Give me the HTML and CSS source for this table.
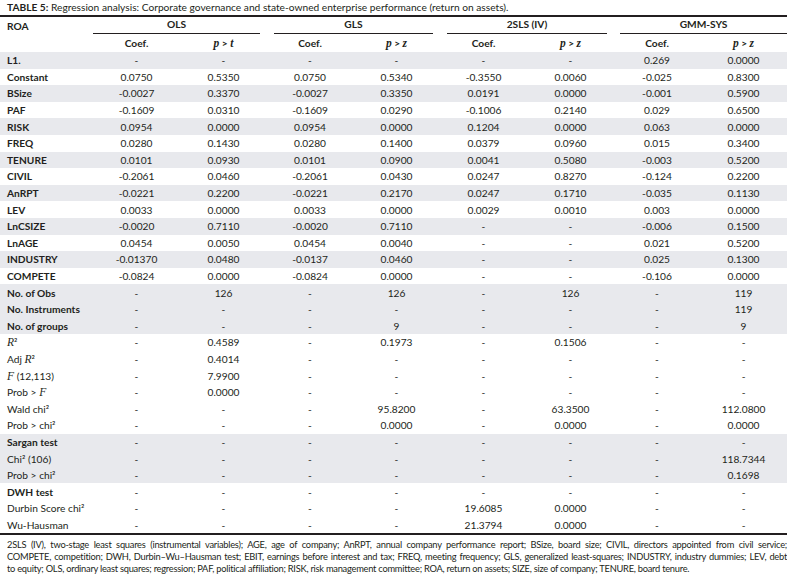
FILE: index.html
```html
<!DOCTYPE html>
<html lang="en">
<head>
<meta charset="utf-8">
<title>Table 5</title>
<link rel="stylesheet" href="styles.css">
</head>
<body>
<div class="caption"><b>TABLE 5:</b> Regression analysis: Corporate governance and state-owned enterprise performance (return on assets).</div>
<table class="reg">
<colgroup>
<col class="c-label"><col class="c87"><col class="c87"><col class="c86"><col class="c87"><col class="c87"><col class="c87"><col class="c86"><col class="c87">
</colgroup>
<thead>
<tr class="h1">
<th class="lab">ROA</th>
<th colspan="2"><span class="rule r-first">OLS</span></th>
<th colspan="2"><span class="rule r-mid">GLS</span></th>
<th colspan="2"><span class="rule r-mid">2SLS (IV)</span></th>
<th colspan="2"><span class="rule r-last">GMM-SYS</span></th>
</tr>
<tr class="h2">
<th></th>
<th>Coef.</th><th><i class="m">p</i> &gt; <i class="m">t</i></th>
<th>Coef.</th><th><i class="m">p</i> &gt; <i class="m">z</i></th>
<th>Coef.</th><th><i class="m">p</i> &gt; <i class="m">z</i></th>
<th>Coef.</th><th><i class="m">p</i> &gt; <i class="m">z</i></th>
</tr>
</thead>
<tbody>
<tr class="sh"><td class="lab b">L1.</td><td>-</td><td>-</td><td>-</td><td>-</td><td>-</td><td>-</td><td>0.269</td><td>0.0000</td></tr>
<tr><td class="lab b">Constant</td><td>0.0750</td><td>0.5350</td><td>0.0750</td><td>0.5340</td><td>-0.3550</td><td>0.0060</td><td>-0.025</td><td>0.8300</td></tr>
<tr class="sh"><td class="lab b">BSize</td><td>-0.0027</td><td>0.3370</td><td>-0.0027</td><td>0.3350</td><td>0.0191</td><td>0.0000</td><td>-0.001</td><td>0.5900</td></tr>
<tr><td class="lab b">PAF</td><td>-0.1609</td><td>0.0310</td><td>-0.1609</td><td>0.0290</td><td>-0.1006</td><td>0.2140</td><td>0.029</td><td>0.6500</td></tr>
<tr class="sh"><td class="lab b">RISK</td><td>0.0954</td><td>0.0000</td><td>0.0954</td><td>0.0000</td><td>0.1204</td><td>0.0000</td><td>0.063</td><td>0.0000</td></tr>
<tr><td class="lab b">FREQ</td><td>0.0280</td><td>0.1430</td><td>0.0280</td><td>0.1400</td><td>0.0379</td><td>0.0960</td><td>0.015</td><td>0.3400</td></tr>
<tr class="sh"><td class="lab b">TENURE</td><td>0.0101</td><td>0.0930</td><td>0.0101</td><td>0.0900</td><td>0.0041</td><td>0.5080</td><td>-0.003</td><td>0.5200</td></tr>
<tr><td class="lab b">CIVIL</td><td>-0.2061</td><td>0.0460</td><td>-0.2061</td><td>0.0430</td><td>0.0247</td><td>0.8270</td><td>-0.124</td><td>0.2200</td></tr>
<tr class="sh"><td class="lab b">AnRPT</td><td>-0.0221</td><td>0.2200</td><td>-0.0221</td><td>0.2170</td><td>0.0247</td><td>0.1710</td><td>-0.035</td><td>0.1130</td></tr>
<tr><td class="lab b">LEV</td><td>0.0033</td><td>0.0000</td><td>0.0033</td><td>0.0000</td><td>0.0029</td><td>0.0010</td><td>0.003</td><td>0.0000</td></tr>
<tr class="sh"><td class="lab b">LnCSIZE</td><td>-0.0020</td><td>0.7110</td><td>-0.0020</td><td>0.7110</td><td>-</td><td>-</td><td>-0.006</td><td>0.1500</td></tr>
<tr><td class="lab b">LnAGE</td><td>0.0454</td><td>0.0050</td><td>0.0454</td><td>0.0040</td><td>-</td><td>-</td><td>0.021</td><td>0.5200</td></tr>
<tr class="sh"><td class="lab b">INDUSTRY</td><td>-0.01370</td><td>0.0480</td><td>-0.0137</td><td>0.0460</td><td>-</td><td>-</td><td>0.025</td><td>0.1300</td></tr>
<tr><td class="lab b">COMPETE</td><td>-0.0824</td><td>0.0000</td><td>-0.0824</td><td>0.0000</td><td>-</td><td>-</td><td>-0.106</td><td>0.0000</td></tr>
<tr class="sh"><td class="lab b">No. of Obs</td><td>-</td><td>126</td><td>-</td><td>126</td><td>-</td><td>126</td><td>-</td><td>119</td></tr>
<tr class="sh"><td class="lab b">No. Instruments</td><td>-</td><td>-</td><td>-</td><td>-</td><td>-</td><td>-</td><td>-</td><td>119</td></tr>
<tr class="sh"><td class="lab b">No. of groups</td><td>-</td><td>-</td><td>-</td><td>9</td><td>-</td><td>-</td><td>-</td><td>9</td></tr>
<tr><td class="lab"><i class="m">R</i>²</td><td>-</td><td>0.4589</td><td>-</td><td>0.1973</td><td>-</td><td>0.1506</td><td>-</td><td>-</td></tr>
<tr><td class="lab">Adj <i class="m">R</i>²</td><td>-</td><td>0.4014</td><td>-</td><td>-</td><td>-</td><td>-</td><td>-</td><td>-</td></tr>
<tr><td class="lab"><i class="m">F</i> (12,113)</td><td>-</td><td>7.9900</td><td>-</td><td>-</td><td>-</td><td>-</td><td>-</td><td>-</td></tr>
<tr><td class="lab">Prob &gt; <i class="m">F</i></td><td>-</td><td>0.0000</td><td>-</td><td>-</td><td>-</td><td>-</td><td>-</td><td>-</td></tr>
<tr><td class="lab">Wald chi²</td><td>-</td><td>-</td><td>-</td><td>95.8200</td><td>-</td><td>63.3500</td><td>-</td><td>112.0800</td></tr>
<tr><td class="lab">Prob &gt; chi²</td><td>-</td><td>-</td><td>-</td><td>0.0000</td><td>-</td><td>0.0000</td><td>-</td><td>0.0000</td></tr>
<tr class="sh"><td class="lab b">Sargan test</td><td>-</td><td>-</td><td>-</td><td>-</td><td>-</td><td>-</td><td>-</td><td>-</td></tr>
<tr class="sh"><td class="lab">Chi² (106)</td><td>-</td><td>-</td><td>-</td><td>-</td><td>-</td><td>-</td><td>-</td><td>118.7344</td></tr>
<tr class="sh"><td class="lab">Prob &gt; chi²</td><td>-</td><td>-</td><td>-</td><td>-</td><td>-</td><td>-</td><td>-</td><td>0.1698</td></tr>
<tr><td class="lab b">DWH test</td><td>-</td><td>-</td><td>-</td><td>-</td><td>-</td><td>-</td><td>-</td><td>-</td></tr>
<tr><td class="lab">Durbin Score chi²</td><td>-</td><td>-</td><td>-</td><td>-</td><td>19.6085</td><td>0.0000</td><td>-</td><td>-</td></tr>
<tr><td class="lab">Wu-Hausman</td><td>-</td><td>-</td><td>-</td><td>-</td><td>21.3794</td><td>0.0000</td><td>-</td><td>-</td></tr>
</tbody>
</table>
<div class="notes">
<div class="line just">2SLS (IV), two-stage least squares (instrumental variables); AGE, age of company; AnRPT, annual company performance report; BSize, board size; CIVIL, directors appointed from civil service;</div>
<div class="line just">COMPETE, competition; DWH, Durbin–Wu–Hausman test; EBIT, earnings before interest and tax; FREQ, meeting frequency; GLS, generalized least-squares; INDUSTRY, industry dummies; LEV, debt</div>
<div class="line">to equity; OLS, ordinary least squares; regression; PAF, political affiliation; RISK, risk management committee; ROA, return on assets; SIZE, size of company; TENURE, board tenure.</div>
</div>
</body>
</html>
```
FILE: styles.css
```css
html, body {
  margin: 0;
  padding: 0;
  background: #ffffff;
}
body {
  font-family: Lato, "Open Sans", "DejaVu Sans", sans-serif;
  font-size: 10.2px;
  color: #231f20;
  width: 787px;
}
.caption {
  height: 15px;
  box-sizing: border-box;
  padding: 1px 0 0 7px;
  line-height: 13px;
  white-space: nowrap;
}
.caption b {
  font-weight: 700;
}
.reg {
  width: 787px;
  table-layout: fixed;
  border-collapse: collapse;
  border-top: 2px solid #231f20;
  border-bottom: 2px solid #231f20;
}
.c-label { width: 93px; }
.c87 { width: 87px; }
.c86 { width: 86px; }
.reg th, .reg td {
  padding: 0;
  text-align: center;
  white-space: nowrap;
  font-weight: normal;
}
.reg th {
  font-weight: 700;
}
.h1 th {
  height: 17px;
  vertical-align: bottom;
  line-height: 15px;
}
.h1 th.lab {
  vertical-align: top;
  padding-top: 2px;
  height: 15px;
}
.rule {
  display: block;
  border-bottom: 1px solid #231f20;
  padding-bottom: 1px;
}
.r-first { margin: 0 7px 0 0; }
.r-mid { margin: 0 7px; }
.r-last { margin: 0 0 0 6px; }
.h2 th {
  height: 18px;
  line-height: 18px;
  vertical-align: middle;
}
.reg td {
  height: 16.6px;
  line-height: 16px;
  vertical-align: middle;
}
.reg .lab {
  text-align: left;
  padding-left: 7px;
}
.reg td.b {
  font-weight: 700;
}
.sh td {
  background: #e8e9ed;
}
.m {
  font-family: "Liberation Serif", "DejaVu Serif", serif;
  font-style: italic;
  font-size: 11.5px;
}
.notes {
  padding: 4px 0 0 7px;
  font-size: 9.3px;
  letter-spacing: -0.25px;
  line-height: 12px;
}
.line {
  white-space: nowrap;
}
.line.just {
  text-align: justify;
  text-align-last: justify;
}
```
